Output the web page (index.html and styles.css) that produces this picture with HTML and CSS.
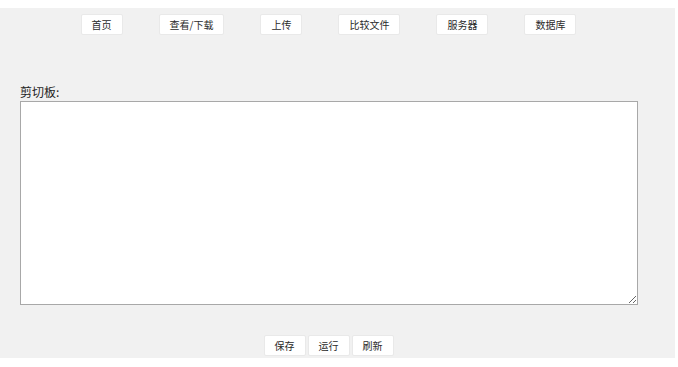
FILE: index.html
```html
<!DOCTYPE html>
<html lang="zh-CN">
<head>
<meta charset="utf-8">
<title>剪切板</title>
<link rel="stylesheet" href="styles.css">
</head>
<body>
<div class="page">
  <div class="content">
    <nav class="nav">
      <button class="btn">首页</button>
      <button class="btn">查看/下载</button>
      <button class="btn">上传</button>
      <button class="btn">比较文件</button>
      <button class="btn">服务器</button>
      <button class="btn">数据库</button>
    </nav>
    <div class="clip">
      <label class="clip-label" for="clip">剪切板:</label>
      <textarea id="clip" class="clip-area"></textarea>
    </div>
    <div class="actions">
      <button class="btn">保存</button>
      <button class="btn">运行</button>
      <button class="btn">刷新</button>
    </div>
  </div>
</div>
</body>
</html>
```

FILE: styles.css
```css
html, body {
  margin: 0;
  padding: 0;
  background: #ffffff;
}
body {
  padding-top: 8px;
  font-family: "Liberation Sans", "Noto Sans CJK SC", sans-serif;
  color: #333333;
}
.page {
  width: 675px;
  height: 350px;
  background: #f1f1f1;
}
.content {
  width: 657px;
  display: flex;
  flex-direction: column;
}
.nav {
  display: flex;
  justify-content: center;
  gap: 36px;
  padding-top: 6px;
}
.btn {
  height: 21px;
  padding: 0 10px;
  margin: 0;
  background: #ffffff;
  border: 1px solid #e9e9e9;
  border-radius: 2px;
  font-family: "Noto Sans CJK SC", sans-serif;
  font-size: 10px;
  line-height: 19px;
  color: #2a2a2a;
  cursor: pointer;
}
.clip {
  display: flex;
  flex-direction: column;
  padding: 49px 20px 0 20px;
}
.clip-label {
  font-family: "Noto Sans CJK SC", sans-serif;
  font-size: 12px;
  line-height: 16px;
  height: 17px;
  color: #1e1e1e;
}
.clip-area {
  box-sizing: border-box;
  width: 618px;
  height: 204px;
  margin: 0;
  border: 1px solid #a8a8a8;
  background: #ffffff;
  resize: both;
}
.actions {
  display: flex;
  justify-content: center;
  gap: 2px;
  padding-top: 30px;
}
```
